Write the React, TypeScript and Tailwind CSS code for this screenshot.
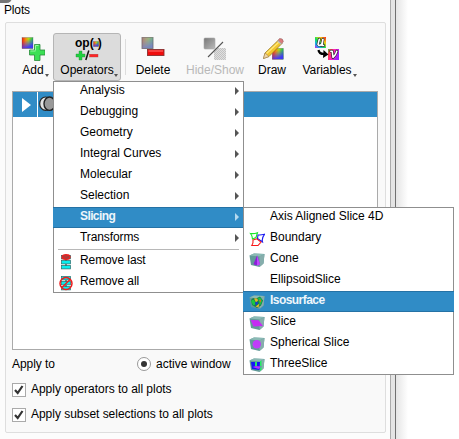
import type { ReactNode } from "react";

function RainbowSquare({ id, x, y, s, opacity = 1 }: { id: string; x: number; y: number; s: number; opacity?: number }) {
  return (
    <g opacity={opacity}>
      <defs>
        <linearGradient id={id}>
          <stop offset="0" stopColor="#f02010" />
          <stop offset=".35" stopColor="#f09010" />
          <stop offset=".6" stopColor="#b0dc10" />
          <stop offset="1" stopColor="#10d040" />
        </linearGradient>
        <linearGradient id={id + "b"} x1=".2" y1="0" x2=".6" y2="1">
          <stop offset=".25" stopColor="#4030ff" stopOpacity="0" />
          <stop offset=".9" stopColor="#4030ff" stopOpacity=".95" />
        </linearGradient>
      </defs>
      <rect x={x} y={y} width={s} height={s} fill={`url(#${id})`} />
      <rect x={x} y={y} width={s} height={s} fill={`url(#${id}b)`} stroke="#555" strokeOpacity=".6" strokeWidth=".5" />
    </g>
  );
}

function AddIcon() {
  return (
    <svg width="24" height="24" viewBox="0 0 24 24">
      <RainbowSquare id="add" x={1} y={0.5} s={11} />
      <path d="M13.500 7.500h5.500v5.500h5v5h-5v5.500h-5.500V18h-5v-5h5z" fill="#3ce055" stroke="#2b8c3c" strokeWidth=".8" />
      <path d="M14.500 13.500v-5h3M9.500 14h5" fill="none" stroke="#98f8a2" />
    </svg>
  );
}

function OperatorsGlyph() {
  return (
    <span className="flex h-6 w-[26px] flex-col">
      <span className="flex h-[13px] items-center whitespace-nowrap pl-px text-[12px] leading-[13px] font-bold">
        <span className="-mt-px">op(</span>
        <svg className="-mx-px mt-px shrink-0" width="6" height="6" viewBox="0 0 6 6"><RainbowSquare id="op" x={0.5} y={0.5} s={5} /></svg>
        <span className="-mt-px">)</span>
      </span>
      <svg width="26" height="11" viewBox="0 13 26 11">
        <path d="M5 14h3v3h3v3H8v3H5v-3H2v-3h3z" fill="#20d040" stroke="#289038" strokeWidth=".4" />
        <path d="M11.800 23 14.800 13.500" stroke="#111" strokeWidth="1.500" />
        <rect x="15.500" y="17.200" width="8.500" height="2.800" fill="#ff2424" stroke="#b04040" strokeWidth=".4" />
      </svg>
    </span>
  );
}

function DeleteIcon() {
  return (
    <svg width="24" height="24" viewBox="0 0 24 24">
      <RainbowSquare id="del" x={1} y={0.500} s={11} opacity={0.6} />
      <rect x="1" y="0.500" width="11" height="11" fill="#6c8c92" opacity=".55" stroke="#555" />
      <rect x="6.500" y="12.500" width="16.500" height="6" fill="#f00d0d" stroke="#8a3030" strokeWidth=".9" />
      <path d="M7.500 14h14.500" stroke="#ff7777" />
    </svg>
  );
}

function HideShowIcon() {
  return (
    <svg width="24" height="24" viewBox="0 0 24 24">
      <defs>
        <linearGradient id="hide" x2="1" y2="1"><stop stopColor="#777" /><stop offset="1" stopColor="#bbb" /></linearGradient>
        <pattern id="dots" width="2" height="2" patternUnits="userSpaceOnUse"><path d="M0 0h1v1H0zM1 1h1v1H1z" fill="#c2c2c2" /></pattern>
      </defs>
      <rect x="1" y="1" width="11" height="11" rx="1" fill="url(#hide)" stroke="#aaa" strokeWidth=".6" />
      <rect x="11" y="11" width="12" height="12" rx="1" fill="#e0e0e0" />
      <rect x="11" y="11" width="12" height="12" rx="1" fill="url(#dots)" />
      <path d="M5 20 20 5" stroke="#555" strokeWidth="1.100" />
    </svg>
  );
}

function DrawIcon() {
  return (
    <svg width="24" height="24" viewBox="0 0 24 24">
      <RainbowSquare id="draw" x={12.3} y={11.3} s={11} />
      <path d="M3.500 21.500 5 16 18.500 3 22 6.500 9 19.500z" fill="#f2c52e" stroke="#8e7020" strokeWidth=".7" />
      <path d="M6.500 16.500 19.500 4.500" stroke="#ffe878" strokeWidth="1.400" />
      <path d="M3.500 21.500 5 16 9 19.500z" fill="#eed5a6" stroke="#9b784d" strokeWidth=".5" />
      <path d="M18 3.500 19.500 1.500Q23 1 23.300 4.500L21.800 6.700z" fill="#dc7b7b" stroke="#885e5e" strokeWidth=".5" />
      <path d="M17.700 3.700 21.300 7.300" stroke="#bbb" strokeWidth="1.300" />
    </svg>
  );
}

function VariablesIcon() {
  return (
    <svg width="24" height="24" viewBox="0 0 24 24">
      <defs>
        <linearGradient id="u" x1="0" y1="1" x2="1" y2="0">
          <stop stopColor="#e01ad0" /><stop offset=".2" stopColor="#18a0ff" /><stop offset=".45" stopColor="#12e058" /><stop offset=".7" stopColor="#f4d012" /><stop offset="1" stopColor="#ff2020" />
        </linearGradient>
        <linearGradient id="v" x1="0" x2="1" y2=".4">
          <stop stopColor="#20d830" /><stop offset=".2" stopColor="#ff4646" /><stop offset=".55" stopColor="#ff20c0" /><stop offset="1" stopColor="#9a20ff" />
        </linearGradient>
      </defs>
      <rect width="11" height="11" fill="url(#u)" />
      <rect x="13" y="12" width="11" height="11" fill="url(#v)" />
      <g fill="none" strokeLinecap="round" strokeLinejoin="round">
        <path d="M4.300 2.200 3 7.500Q4.500 9.500 6.800 7L8 2.200 7 8.500h1.500M15.800 14.200h1.400l.8 6.300Q21 18 21.800 14.200" stroke="#222" strokeWidth="2.800" />
        <path d="M4.300 2.200 3 7.500Q4.500 9.500 6.800 7L8 2.200 7 8.500h1.500M15.800 14.200h1.400l.8 6.300Q21 18 21.800 14.200" stroke="#fff" strokeWidth="1.600" />
      </g>
      <path d="M3.500 13Q4 17 9 17" fill="none" stroke="#000" strokeWidth="2.200" />
      <path d="M8.500 13 13.500 17.500 8 21z" />
    </svg>
  );
}

type ToolProps = { label: string; left: string; icon: ReactNode; arrow?: boolean; disabled?: boolean; active?: boolean };

function Tool({ label, left, icon, arrow, disabled, active }: ToolProps) {
  return (
    <button
      className={`relative flex h-12 shrink-0 flex-col items-center ${left} ${active ? "rounded-[3px] border border-[#b5b5b5] bg-[#dcdcdc] pt-[3px]" : "pt-1"} ${disabled ? "text-[#b8b8b8]" : "text-black"}`}
    >
      {icon}
      <span className="mt-[2px] block whitespace-nowrap leading-[14px]">{label}</span>
      {arrow && <i className={`absolute border-x-[2.5px] border-t-[3px] border-x-transparent border-t-[#555] ${active ? "right-[2px] bottom-[3px]" : "right-0 bottom-1"}`} />}
    </button>
  );
}

function StackIcon({ all }: { all?: boolean }) {
  return (
    <svg width="14" height="16" viewBox="0 0 14 16">
      {[2, 7, 12].map((y) => (
        <rect key={y} x="2.500" y={y - 0.5} width="9" height="3.400" fill="#08eeee" stroke="#2a6b6b" strokeWidth=".7" />
      ))}
      <path d="M7 5v1.500M7 10v1.500" stroke="#222" />
      {all ? (
        <g fill="none" stroke="#f01c1c" strokeWidth="1.500"><circle cx="7" cy="8.500" r="6" /><path d="m3 12.500 8-8" /></g>
      ) : (
        <g><ellipse cx="7" cy="3" rx="4.100" ry="2.300" fill="#a04040" stroke="#f02020" strokeWidth="1.200" /><path d="m4 4 6-3" stroke="#f02020" strokeWidth=".8" /></g>
      )}
    </svg>
  );
}

function BoundaryIcon() {
  return (
    <svg width="16" height="16" viewBox="0 0 16 16" fill="none" strokeWidth="1.100">
      <path d="M1.500 2.500Q5 3 8.500 1.700L7 6.500 3.500 8Q3.500 5 1.500 2.500z" stroke="#18e828" />
      <path d="M9 4Q12 4.300 15.500 3.300 12.500 7 13.500 11L8.500 7.500z" stroke="#1818f0" />
      <path d="m4 9 3.800-1.200L12 11l-3 3.500H2.800Q4.500 12 4 9z" stroke="#f81818" />
    </svg>
  );
}

function CubeIcon({ kind }: { kind: "cone" | "iso" | "slice" | "sphere" | "three" }) {
  return (
    <svg width="16" height="16" viewBox="0 0 16 16">
      <path d="M.5 3.500 5 1.500 15.500 2 14.500 11.500 10.500 15 2 13z" fill="#629a98" />
      <path d="m.5 3.500 10 1 5-2.500L5 1.500z" fill="#8bbab5" />
      <path d="m10.500 4.500 5-2.500-1 9.500-4 3.500z" fill="#86aeac" />
      {kind === "cone" && <><path d="M8 3.500 4.500 12Q7 14.500 11 12z" fill="#8b20d7" /><path d="M8 3.500v10.300Q10 13.500 11 12z" fill="#bd45ff" /></>}
      {kind === "iso" && (
        <>
          <path d="M2 6Q4 3 7 4.500l4-2 3 4-2 5-4 2.500-5-3z" fill="#177c52" />
          <path d="M2 7q3-3 4 1t-2 3zM9 3.500q4 0 4 4l-2 4z" fill="#18c83c" />
          <path d="M5 4.500q4-1 4 2l-2 2zM6.500 12.500l4-3-1 4z" fill="#e0b729" />
          <path d="M6 8.500q3-2 3 1l-2 2z" fill="#153ed0" /><path d="m10 6.500 2-1v3z" fill="#d96622" />
        </>
      )}
      {kind === "slice" && <path d="m1.500 5 8 .2 4.500 5.800-9.500.5z" fill="#c52cf2" />}
      {kind === "sphere" && <circle cx="7.800" cy="8.300" r="4.200" fill="#c03cf8" />}
      {kind === "three" && (
        <>
          <path d="M2 5h9l-.5 8-7.500-1z" fill="#1515f5" />
          <path d="M6 5h2v4H6zM11 4l1.500-.5v9L11 14z" fill="#22ed62" />
          <path d="m3.500 10 3.500-1 5.500.5-3 2.500z" fill="#b434fd" />
        </>
      )}
    </svg>
  );
}

type Item = { label: string; ls: string; sub?: boolean; on?: boolean; icon?: ReactNode };

const operators: Item[] = [
  { label: "Analysis", ls: "tracking-normal", sub: true },
  { label: "Debugging", ls: "tracking-normal", sub: true },
  { label: "Geometry", ls: "tracking-normal", sub: true },
  { label: "Integral Curves", ls: "tracking-normal", sub: true },
  { label: "Molecular", ls: "tracking-normal", sub: true },
  { label: "Selection", ls: "tracking-normal", sub: true },
  { label: "Slicing", ls: "tracking-[-0.6px]", sub: true, on: true },
  { label: "Transforms", ls: "tracking-[-0.1px]", sub: true },
];
const removal: Item[] = [
  { label: "Remove last", ls: "tracking-[-0.1px]", icon: <StackIcon /> },
  { label: "Remove all", ls: "tracking-[-0.1px]", icon: <StackIcon all /> },
];
const slicing: Item[] = [
  { label: "Axis Aligned Slice 4D", ls: "tracking-normal" },
  { label: "Boundary", ls: "tracking-normal", icon: <BoundaryIcon /> },
  { label: "Cone", ls: "tracking-normal", icon: <CubeIcon kind="cone" /> },
  { label: "EllipsoidSlice", ls: "tracking-normal" },
  { label: "Isosurface", ls: "tracking-[-0.55px]", on: true, icon: <CubeIcon kind="iso" /> },
  { label: "Slice", ls: "tracking-normal", icon: <CubeIcon kind="slice" /> },
  { label: "Spherical Slice", ls: "tracking-normal", icon: <CubeIcon kind="sphere" /> },
  { label: "ThreeSlice", ls: "tracking-normal", icon: <CubeIcon kind="three" /> },
];

function MenuRow({ label, ls, sub, on, icon }: Item) {
  return (
    <div className={`-mx-px flex h-[21px] items-start pl-1.5 ${on ? "border-y border-[#2572a5] bg-[#308cc6] font-bold text-[#eef6fb]" : ""}`}>
      <span className={`flex h-[21px] w-[21px] shrink-0 items-center ${on ? "-mt-px" : ""}`}>{icon}</span>
      <span className={`grow whitespace-nowrap leading-[19px] ${on ? "-mt-px" : ""} ${ls}`}>{label}</span>
      {sub && <i className={`mr-[5px] border-y-4 border-l-4 border-y-transparent ${on ? "mt-[5px] border-l-[#b5d9ef]" : "mt-1.5 border-l-[#555]"}`} />}
    </div>
  );
}

function Check({ label }: { label: string }) {
  return (
    <label className="flex h-[25px] items-center">
      <span className="flex size-[14px] items-center justify-center border border-[#aaa] bg-white">
        <svg width="10" height="10" viewBox="0 0 10 10" fill="none" stroke="#333" strokeWidth="2.200"><path d="m1 5 2.700 3L8.500 1" /></svg>
      </span>
      <span className="-mt-[2px] ml-[5px] whitespace-nowrap tracking-[-0.03px]">{label}</span>
    </label>
  );
}

export default function App() {
  return (
    <div className="relative flex h-[439px] w-[459px] overflow-hidden bg-white font-['Liberation_Sans',Arial,sans-serif] text-[12px] leading-[14px] text-black">
      <main className="relative h-full w-[390px] shrink-0 bg-[#fcfcfc] pt-[3px] pl-[5px]">
        <i className="absolute -top-2 -left-2 h-[11px] w-[20px] rounded-full bg-[#777]" />
        <h1 className="-ml-px h-[19px] tracking-[-0.15px]">Plots</h1>
        <section className="h-[411px] w-[381px] rounded-[2px] border border-[#dedede] bg-[#f9f9f9] px-1.5 pt-[10px]">
          <div className="flex h-[58px] items-start">
            <Tool label="Add" left="ml-[5px] w-8" icon={<AddIcon />} arrow />
            <Tool label="Operators" left="ml-[4px] w-[68px]" icon={<OperatorsGlyph />} arrow active />
            <i className="mt-[6px] ml-1 h-9 w-px shrink-0 bg-[#ddd]" />
            <Tool label="Delete" left="ml-[5px] w-11" icon={<DeleteIcon />} />
            <Tool label="Hide/Show" left="ml-[7px] w-[66px]" icon={<HideShowIcon />} disabled />
            <Tool label="Draw" left="ml-[6px] w-9" icon={<DrawIcon />} />
            <Tool label="Variables" left="ml-[7px] w-[60px]" icon={<VariablesIcon />} arrow />
          </div>
          <div className="h-[259px] w-[366px] border border-[#aaa] bg-white">
            <div className="flex h-[25px] bg-[#308cc6]">
              <span className="flex w-6 items-center justify-center"><i className="ml-0.5 border-y-[7.5px] border-l-[9px] border-y-transparent border-l-white" /></span>
              <span className="w-px bg-white" />
              <svg className="mt-[3px]" width="22" height="18" viewBox="0 0 22 18"><ellipse cx="7.500" cy="8.700" rx="5.800" ry="6.700" fill="#e3e3e3" stroke="#252525" strokeWidth="1.200" /><ellipse cx="11.500" cy="8.700" rx="5.500" ry="6.700" fill="#999" stroke="#222" strokeWidth="1.400" /></svg>
            </div>
          </div>
          <div className="flex h-[27px] items-center">
            <span className="w-[125px] tracking-[-0.05px]">Apply to</span>
            <span className="flex size-[14px] items-center justify-center rounded-full border border-[#999] bg-white"><i className="size-[6px] rounded-full bg-[#333]" /></span>
            <span className="ml-[5px]">active window</span>
          </div>
          <Check label="Apply operators to all plots" />
          <Check label="Apply subset selections to all plots" />
        </section>
      </main>
      <div className="h-full w-[6px] shrink-0 border-x border-l-[#aaa] border-r-[#707070] bg-[#e4e4e4]" />
      <div className="h-full w-3 shrink-0 bg-linear-to-r from-[#e5e5e5] to-white" />

      <nav className="absolute top-[81px] left-[53px] h-[212px] w-[191px] border border-[#8f8f8f] bg-white">
        <div className="-mt-px">{operators.map((item) => <MenuRow key={item.label} {...item} />)}</div>
        <hr className="mx-1 mb-px border-[#b8b8b8]" />
        {removal.map((item) => <MenuRow key={item.label} {...item} />)}
      </nav>
      <nav className="absolute top-[207px] left-[243px] h-[168px] w-[211px] border border-[#8f8f8f] bg-white">
        <div className="-mt-px">{slicing.map((item) => <MenuRow key={item.label} {...item} />)}</div>
      </nav>
    </div>
  );
}
